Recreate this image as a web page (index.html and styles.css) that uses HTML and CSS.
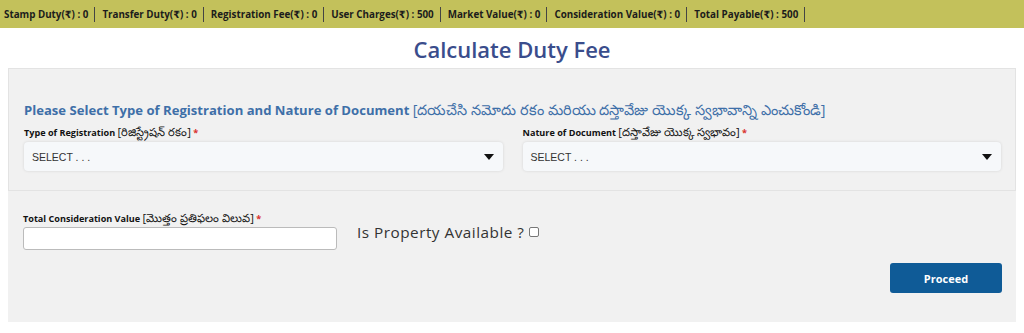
FILE: index.html
```html
<!DOCTYPE html>
<html lang="en">
<head>
<meta charset="utf-8">
<title>Calculate Duty Fee</title>
<link rel="stylesheet" href="styles.css">
</head>
<body>
<div class="duty-bar">
  <span class="duty-item">Stamp Duty(₹) : 0</span>
  <span class="duty-item">Transfer Duty(₹) : 0</span>
  <span class="duty-item">Registration Fee(₹) : 0</span>
  <span class="duty-item">User Charges(₹) : 500</span>
  <span class="duty-item">Market Value(₹) : 0</span>
  <span class="duty-item">Consideration Value(₹) : 0</span>
  <span class="duty-item">Total Payable(₹) : 500</span>
</div>
<h1 class="page-title">Calculate Duty Fee</h1>
<div class="panel">
  <section class="panel-top">
    <h2 class="section-title">Please Select Type of Registration and Nature of Document <span class="te">[దయచేసి నమోదు రకం మరియు దస్తావేజు యొక్క స్వభావాన్ని ఎంచుకోండి]</span></h2>
    <div class="field-row">
      <div class="field">
        <label class="field-label">Type of Registration <span class="te">[రిజిస్ట్రేషన్ రకం]</span> <span class="req">*</span></label>
        <div class="select-box"><span>SELECT . . .</span><span class="caret"></span></div>
      </div>
      <div class="field">
        <label class="field-label">Nature of Document <span class="te">[దస్తావేజు యొక్క స్వభావం]</span> <span class="req">*</span></label>
        <div class="select-box"><span>SELECT . . .</span><span class="caret"></span></div>
      </div>
    </div>
  </section>
  <section class="panel-bottom">
    <div class="value-row">
      <div class="value-field">
        <label class="field-label">Total Consideration Value <span class="te">[మొత్తం ప్రతిఫలం విలువ]</span> <span class="req">*</span></label>
        <input class="text-input" type="text">
      </div>
      <div class="property">Is Property Available ? <span class="check"></span></div>
    </div>
    <div class="actions">
      <button class="proceed" type="button">Proceed</button>
    </div>
  </section>
</div>
</body>
</html>
```
FILE: styles.css
```css
* { box-sizing: border-box; }
body {
  margin: 0;
  background: #fff;
  font-family: "Open Sans", "DejaVu Sans", sans-serif;
  color: #222;
}
.duty-bar {
  height: 28px;
  background: #c3c15b;
  display: flex;
  align-items: center;
  padding-left: 4px;
}
.duty-item {
  font-size: 9.8px;
  font-weight: 700;
  color: #1c1c1c;
  padding-right: 6px;
  margin-right: 7px;
  border-right: 1px solid #444;
  line-height: 15px;
}
.page-title {
  margin: 7px 0 0;
  height: 33px;
  text-align: center;
  font-size: 22px;
  font-weight: 600;
  color: #3a4d8c;
  line-height: 28px;
}
.panel {
  margin: 0 8px;
  background: #f1f1f1;
  height: 254px;
}
.panel-top {
  border: 1px solid #e3e3e3;
  height: 123px;
  padding: 31px 14px 0 15px;
}
.section-title {
  margin: 0;
  font-size: 13.1px;
  font-weight: 700;
  color: #3e6fa8;
  line-height: 20px;
  white-space: nowrap;
}
.section-title .te { font-size: 1.1em; font-weight: 400; }
.field-row {
  display: grid;
  grid-template-columns: 1fr 1fr;
  column-gap: 20px;
  margin-top: 5px;
}
.field-label {
  display: block;
  font-size: 9.1px;
  font-weight: 700;
  color: #111;
  line-height: 13px;
}
.field-label .te { font-size: 1.25em; font-weight: 400; }
.req { color: #d9302c; }
.select-box {
  margin-top: 3px;
  height: 29px;
  background: #f6f8fa;
  border-radius: 4px;
  box-shadow: 0 0 3px rgba(0,0,0,0.12);
  display: flex;
  align-items: center;
  justify-content: space-between;
  padding: 0 9px 0 8px;
  font-family: "Liberation Sans", Arial, sans-serif;
  font-size: 10.5px;
  color: #333;
}
.caret {
  width: 0; height: 0;
  border-left: 5px solid transparent;
  border-right: 5px solid transparent;
  border-top: 6px solid #111;
}
.panel-bottom {
  padding: 20px 14px 0 15px;
}
.value-row {
  display: flex;
  align-items: flex-end;
  gap: 20px;
}
.value-field { width: 314px; }
.text-input {
  display: block;
  width: 314px;
  height: 23px;
  margin-top: 2px;
  border: 1px solid #bbb;
  border-radius: 3px;
  background: #fff;
}
.property {
  font-size: 15.3px;
  color: #333;
  line-height: 20px;
  margin-bottom: 8px;
  display: flex;
  align-items: center;
  gap: 5px;
  letter-spacing: 0.5px;
}
.check {
  width: 10px; height: 10px;
  border: 1px solid #777;
  border-radius: 2px;
  background: #fff;
}
.actions {
  display: flex;
  justify-content: flex-end;
  margin-top: 13px;
}
.proceed {
  width: 112px;
  height: 30px;
  background: #0f5b97;
  color: #fff;
  border: 0;
  border-radius: 3px;
  font-family: "Open Sans", sans-serif;
  font-weight: 700;
  font-size: 11px;
}
```
